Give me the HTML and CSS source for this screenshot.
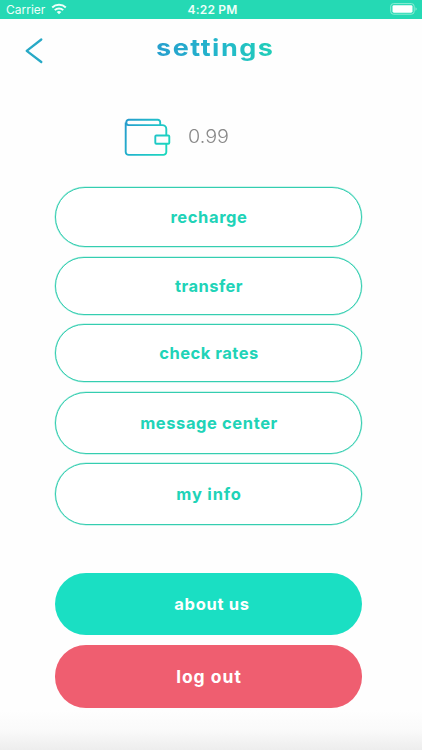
FILE: index.html
```
<!DOCTYPE html>
<html lang="en">
<head>
<meta charset="utf-8">
<meta name="viewport" content="width=device-width, initial-scale=1">
<title>settings</title>
<link rel="stylesheet" href="styles.css">
</head>
<body>
<div class="screen">
  <div class="status">
    <div class="carrier"><span>Carrier</span>
      <svg width="16" height="12" viewBox="0 0 16 12" fill="none" stroke="#effff9" stroke-width="2"><path d="M1.2 4.5a9.7 9.7 0 0 1 13.6 0M3.8 7.1a6 6 0 0 1 8.4 0"/><path d="M5.7 9a3.3 3.3 0 0 1 4.6 0L8 11.3z" fill="#effff9" stroke="none"/></svg>
    </div>
    <time>4:22 PM</time>
    <svg class="battery" width="28" height="12" viewBox="0 0 28 12"><rect x=".7" y=".6" width="23.5" height="10.6" rx="2.8" fill="none" stroke="#8eedd4"/><rect x="2.5" y="2.2" width="20" height="7.5" rx="1.4" fill="#fff"/><path d="M25.5 4.2c1.6.5 1.6 3 0 3.5z" fill="#8eedd4"/></svg>
  </div>
  <header>
    <svg class="back" width="20" height="28" viewBox="0 0 20 28" fill="none" stroke="#27a9c6" stroke-width="2.3" stroke-linecap="round" stroke-linejoin="round"><path d="M16.3 2.5 1.7 13.8l14.6 11.2"/></svg>
    <h1>settings</h1>
  </header>
  <div class="balance">
    <svg width="48" height="40" viewBox="0 0 48 40" fill="none" stroke="url(#wallet)" stroke-width="1.9" stroke-linejoin="round"><defs><linearGradient id="wallet" gradientUnits="userSpaceOnUse" x1="1" y1="8" x2="45" y2="30"><stop stop-color="#269dcc"/><stop offset=".5" stop-color="#20bdcb"/><stop offset="1" stop-color="#1bd8bd"/></linearGradient></defs><path d="M36.2 7.1V4.2a2.4 2.4 0 0 0-2.4-2.4H4.5a2.7 2.7 0 0 0 0 5.3h33.8a4 4 0 0 1 4 4v6.3M42.3 25.8v8.1a3 3 0 0 1-3 3H4.7a3 3 0 0 1-3-3V4.5"/><rect x="31.3" y="17.5" width="14" height="8.3" rx="1"/></svg>
    <span>0.99</span>
  </div>
  <nav>
    <button class="recharge"><span>recharge</span></button>
    <button class="transfer"><span>transfer</span></button>
    <button class="rates"><span>check rates</span></button>
    <button class="messages"><span>message center</span></button>
    <button class="info"><span>my info</span></button>
    <button class="about"><span>about us</span></button>
    <button class="logout"><span>log out</span></button>
  </nav>
</div>
</body>
</html>
```
FILE: styles.css
```
* { box-sizing: border-box; }
body { margin: 0; }
.screen {
  height: 750px;
  overflow: hidden;
  background: linear-gradient(#fefefe 710px, #fafafa 730px, #ededed 750px);
  font-family: Inter, sans-serif;
}
.status {
  height: 19px;
  background: #25d9b4;
  color: #effff9;
  display: grid;
  grid-template-columns: 1fr auto 1fr;
  align-items: center;
  padding: 0 4px 0 7px;
  font-size: 12px;
  line-height: 19px;
}
.carrier { display: flex; align-items: center; gap: 5px; margin-left: -1px; }
.carrier svg { margin: -1px 0 0 1px; }
time { font-weight: 600; letter-spacing: .2px; }
.battery { justify-self: end; margin-top: -2px; }
header {
  height: 81px;
  display: grid;
  grid-template-columns: 131px auto 1fr;
  align-items: start;
  padding: 18px 0 0 25px;
}
h1 {
  margin: -4px 0 0;
  font: 700 23.5px/30px Inter, sans-serif;
  letter-spacing: 1.3px;
  color: transparent;
  background: linear-gradient(90deg, #279fce, #23b7cb 55%, #21cfb7);
  background-clip: text;
  -webkit-background-clip: text;
  transform: scaleX(1.15);
  transform-origin: left;
}
.balance {
  height: 87px;
  display: flex;
  align-items: flex-start;
  gap: 16px;
  padding: 18px 0 0 124px;
  color: #898989;
  font-size: 18px;
  font-weight: 300;
  line-height: 37px;
}
.balance span { transform: scaleX(1.1); transform-origin: left; }
nav { padding-left: 55px; }
button {
  display: flex;
  align-items: center;
  justify-content: center;
  width: 307px;
  padding: 0 0 1px 1px;
  border: 1px solid #35cdb0;
  box-shadow: 0 0 0 .5px #9bebdb;
  border-radius: 31px;
  background: #fff;
  color: #20d3b7;
  font: 700 16.5px/20px Inter, sans-serif;
  letter-spacing: .6px;
}
.recharge { height: 60px; margin-bottom: 10px; }
.transfer { height: 58px; margin-bottom: 9px; letter-spacing: .45px; }
.rates { height: 58px; margin-bottom: 10px; letter-spacing: .5px; }
.messages { height: 62px; margin-bottom: 9px; }
.info { height: 62px; margin-bottom: 48px; letter-spacing: .8px; }
.about, .logout { border: 0; color: #fff; box-shadow: none; }
.about { height: 62px; margin-bottom: 10px; padding-left: 7px; background: #1adfc3; letter-spacing: .7px; }
.logout { height: 63px; padding-bottom: 0; background: #ef5e70; font-size: 17.5px; letter-spacing: 1px; }
```
